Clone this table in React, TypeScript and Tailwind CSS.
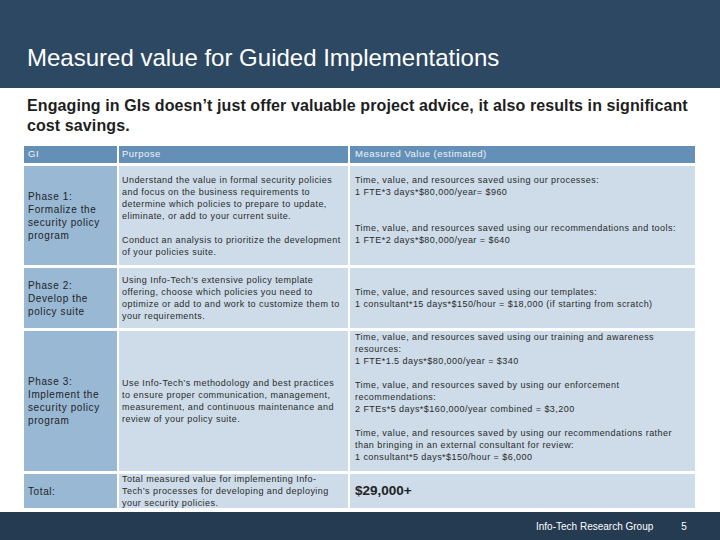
import React from 'react';

const font = { fontFamily: '"Liberation Sans", Arial, sans-serif' };

const Lines: React.FC<{ lines: string[] }> = ({ lines }) => (
  <>
    {lines.map((l, i) => (
      <div key={i} className="whitespace-nowrap">
        {l === '' ? '\u00a0' : l}
      </div>
    ))}
  </>
);

const GiCell: React.FC<{ lines: string[] }> = ({ lines }) => (
  <div className="bg-[#98b8d4] flex items-center pl-[4px] text-[10px] leading-[13px] tracking-[0.6px] text-[#1f1f1f] overflow-hidden">
    <div>
      <Lines lines={lines} />
    </div>
  </div>
);

const Cell: React.FC<{ lines: string[]; pl?: string; align?: string }> = ({
  lines,
  pl = 'pl-[3px]',
  align = 'items-center',
}) => (
  <div className={`bg-[#cddce8] flex ${align} ${pl} text-[9px] leading-[12px] tracking-[0.45px] text-[#2a2a2a] overflow-hidden`}>
    <div>
      <Lines lines={lines} />
    </div>
  </div>
);

export default function App() {
  return (
    <div className="w-[720px] h-[540px] bg-white flex flex-col overflow-hidden" style={font}>
      {/* title bar */}
      <div className="h-[88px] bg-[#2c4862] flex items-end pl-[27px] pb-[16px]">
        <h1 className="text-[24px] leading-[28px] text-white">Measured value for Guided Implementations</h1>
      </div>

      <p className="mt-[8px] pl-[27px] w-[700px] text-[16px] leading-[20px] tracking-[0.1px] font-bold text-[#1e1e1e]">
        Engaging in GIs doesn’t just offer valuable project advice, it also results in significant cost savings.
      </p>

      {/* table */}
      <div className="mt-[10px] ml-[24px] grid grid-cols-[93px_229px_345px] grid-rows-[17px_99px_60px_140px_34px] gap-x-[2px] gap-y-[3px]">
        <div className="bg-[#6490b7] text-[#eef3f8] text-[9.5px] flex items-center pl-[4px] tracking-[0.5px]">GI</div>
        <div className="bg-[#6490b7] text-[#eef3f8] text-[9.5px] flex items-center pl-[3px] tracking-[0.5px]">Purpose</div>
        <div className="bg-[#6490b7] text-[#eef3f8] text-[9.5px] flex items-center pl-[5px] tracking-[0.5px]">Measured Value (estimated)</div>

        <GiCell lines={['Phase 1:', 'Formalize the', 'security policy', 'program']} />
        <Cell
          lines={[
            'Understand the value in formal security policies',
            'and focus on the business requirements to',
            'determine which policies to prepare to update,',
            'eliminate, or add to your current suite.',
            '',
            'Conduct an analysis to prioritize the development',
            'of your policies suite.',
          ]}
        />
        <Cell
          pl="pl-[5px]"
          lines={[
            'Time, value, and resources saved using our processes:',
            '1 FTE*3 days*$80,000/year= $960',
            '',
            '',
            'Time, value, and resources saved using our recommendations and tools:',
            '1 FTE*2 days*$80,000/year = $640',
            '',
          ]}
        />

        <GiCell lines={['Phase 2:', 'Develop the', 'policy suite']} />
        <Cell
          lines={[
            'Using Info-Tech’s extensive policy template',
            'offering, choose which policies you need to',
            'optimize or add to and work to customize them to',
            'your requirements.',
          ]}
        />
        <Cell
          pl="pl-[5px]"
          lines={[
            'Time, value, and resources saved using our templates:',
            '1 consultant*15 days*$150/hour = $18,000 (if starting from scratch)',
          ]}
        />

        <GiCell lines={['Phase 3:', 'Implement the', 'security policy', 'program']} />
        <Cell
          lines={[
            'Use Info-Tech’s methodology and best practices',
            'to ensure proper communication, management,',
            'measurement, and continuous maintenance and',
            'review of your policy suite.',
          ]}
        />
        <Cell
          pl="pl-[5px]"
          align="items-start"
          lines={[
            'Time, value, and resources saved using our training and awareness',
            'resources:',
            '1 FTE*1.5 days*$80,000/year = $340',
            '',
            'Time, value, and resources saved by using our enforcement',
            'recommendations:',
            '2 FTEs*5 days*$160,000/year combined = $3,200',
            '',
            'Time, value, and resources saved by using our recommendations rather',
            'than bringing in an external consultant for review:',
            '1 consultant*5 days*$150/hour = $6,000',
          ]}
        />

        <GiCell lines={['Total:']} />
        <Cell
          lines={[
            'Total measured value for implementing Info-',
            'Tech’s processes for developing and deploying',
            'your security policies.',
          ]}
        />
        <div className="bg-[#cddce8] flex items-center pl-[5px] text-[13.5px] font-bold text-[#222]">$29,000+</div>
      </div>

      {/* footer */}
      <div className="mt-auto h-[28px] bg-[#243b52] flex items-center text-white text-[10px]">
        <span className="ml-[536px]">Info-Tech Research Group</span>
        <span className="ml-[28px]">5</span>
      </div>
    </div>
  );
}
